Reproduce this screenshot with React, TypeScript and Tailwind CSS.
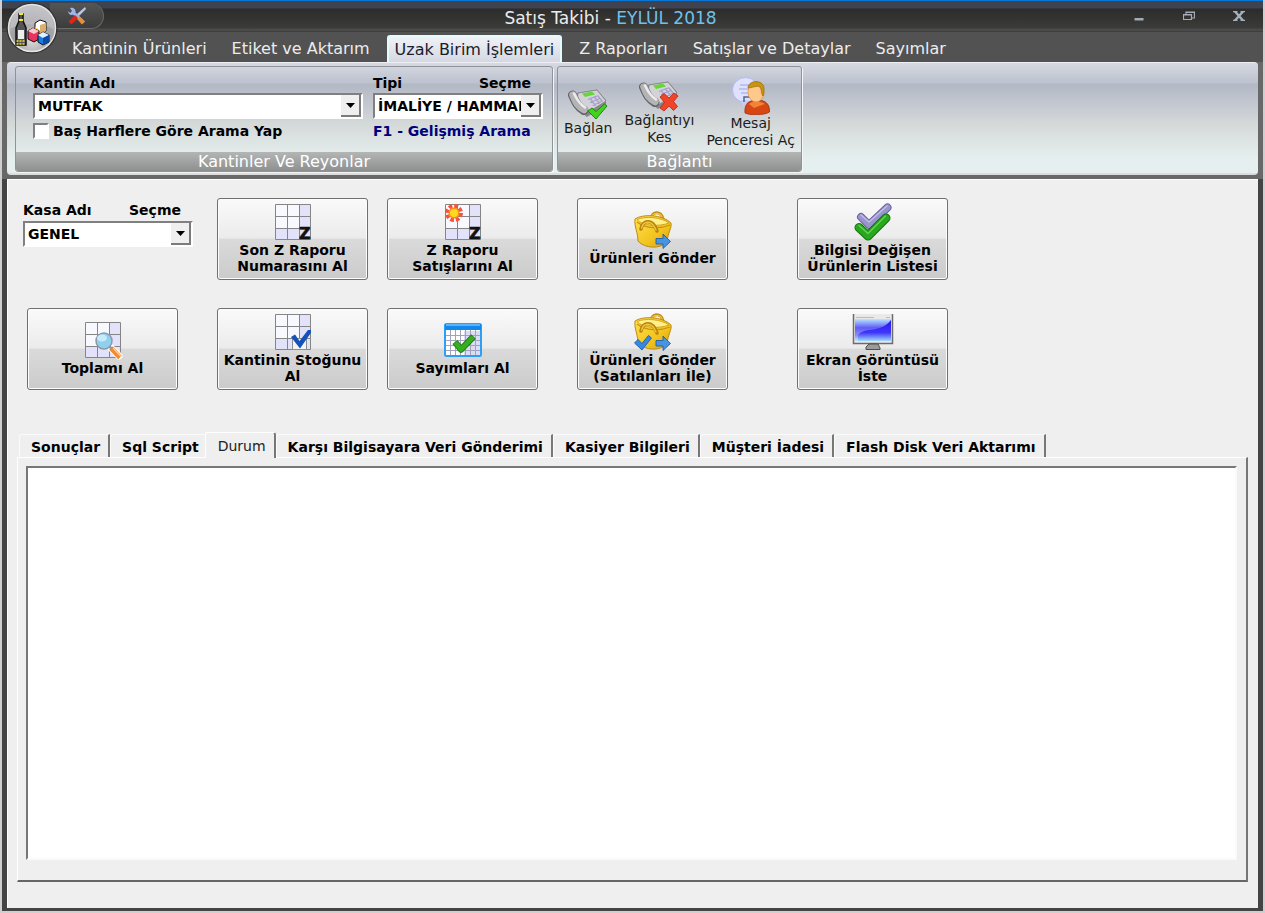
import React, { useState } from 'react';

const ribbonTabs = [
  'Kantinin Ürünleri',
  'Etiket ve Aktarım',
  'Uzak Birim İşlemleri',
  'Z Raporları',
  'Satışlar ve Detaylar',
  'Sayımlar'
];

const sheetTabs = [
  'Sonuçlar',
  'Sql Script',
  'Durum',
  'Karşı Bilgisayara Veri Gönderimi',
  'Kasiyer Bilgileri',
  'Müşteri İadesi',
  'Flash Disk Veri Aktarımı'
];

const GridBase = () => (
  <>
    <rect x="0.5" y="0.5" width="35" height="35" fill="#f8f8ff" />
    <path d="M24 1h11v34H1V24h23z" fill="#e2e2fb" />
    <path d="M0.5 0.5h35v35h-35zM12.5 0v36M24.5 0v36M0 12.5h36M0 24.5h36" fill="none" stroke="#858585" />
  </>
);

const GridZIcon = () => (
  <svg width="36" height="36" viewBox="0 0 36 36" className="overflow-visible">
    <GridBase />
    <text x="24" y="35" fontSize="16" fontWeight="bold" stroke="#111" strokeWidth="0.6" fill="#111">Z</text>
  </svg>
);

const GridNewIcon = () => (
  <svg width="36" height="36" viewBox="0 0 36 36" className="overflow-visible">
    <GridBase />
    <circle cx="9" cy="9" r="7" fill="none" stroke="#f2553a" strokeWidth="4" strokeDasharray="3.6 1.9" />
    <circle cx="9" cy="9" r="5.5" fill="#ff8a1e" />
    <circle cx="9" cy="9" r="4" fill="#ffd91c" />
    <text x="24" y="35" fontSize="16" fontWeight="bold" stroke="#111" strokeWidth="0.6" fill="#111">Z</text>
  </svg>
);

const GridSearchIcon = () => (
  <svg width="36" height="36" viewBox="0 0 36 36" className="overflow-visible">
    <GridBase />
    <path d="M25 25l9 9" stroke="#fff" strokeWidth="7" strokeLinecap="round" />
    <path d="M26 26l9 9.500" stroke="#f28a2e" strokeWidth="5" />
    <path d="M28 26l8 8.500" stroke="#ffd2a0" strokeWidth="1.200" />
    <path d="M24 24l3 3" stroke="#999" strokeWidth="2.500" />
    <circle cx="19" cy="19" r="8" fill="#8fd0ee" stroke="#8a9aa6" strokeWidth="1.500" />
    <ellipse cx="17" cy="16" rx="5" ry="3.500" fill="#c6ebfa" />
  </svg>
);

const GridCheckIcon = () => (
  <svg width="36" height="36" viewBox="0 0 36 36">
    <GridBase />
    <rect x="17.500" y="24.500" width="14" height="11" fill="#f4f4f4" stroke="#8d8d8d" />
    <path d="M16 23l4-2.500 4.500 6.500L33 16h3.500v2L25 34.500z" fill="#1551b8" />
  </svg>
);

const CalendarIcon = () => (
  <svg width="38" height="36" viewBox="0 0 38 36">
    <rect x="1" y="2" width="36" height="32" rx="1.500" fill="#fff" stroke="#2ba0f5" strokeWidth="2" />
    <rect x="1" y="2" width="36" height="6" fill="#1188ea" />
    <path d="M2 3h34" stroke="#6cc3ff" strokeWidth="1.500" />
    <path d="M20 9h16v24H20z" fill="#dcdcf6" />
    <path d="M6.500 8v25M11.500 8v25M16.500 8v25M21.500 8v25M26.500 8v25M31.500 8v25M2 13.500h34M2 18.500h34M2 23.500h34M2 28.500h34" stroke="#a2a2ba" />
    <path d="M11 20l6 7.500L29.500 14.500" fill="none" stroke="#1d8211" strokeWidth="6.500" strokeLinejoin="round" />
    <path d="M11.500 20.500l5.500 7L29 15" fill="none" stroke="#37ae22" strokeWidth="4.500" strokeLinejoin="round" />
  </svg>
);

const BasketIcon = ({ withCheck = false }: { withCheck?: boolean }) => (
  <svg width="38" height="38" viewBox="0 0 38 38">
    <defs>
      <linearGradient id="basket" x1="0" y1="0" x2="1" y2="1">
        <stop offset="0" stopColor="#ffe24a" />
        <stop offset="0.600" stopColor="#f2c41f" />
        <stop offset="1" stopColor="#d89c10" />
      </linearGradient>
    </defs>
    <path d="M17 9C17 0 27 -1 29 8" fill="none" stroke="#c48d17" strokeWidth="3.200" />
    <path d="M17 9C17 1 27 0 28.500 8" fill="none" stroke="#f0c440" strokeWidth="1.300" />
    <path d="M1 8C8 3 28 3 37 12C38 17 34 21 33 31C27 38 11 38 4 30C4 22 0 15 1 8z" fill="url(#basket)" stroke="#bd8a13" />
    <path d="M3 8.500C11 5 27 6 35 12C25 16 8 15 3 8.500z" fill="#fff08a" stroke="#d6a51c" />
    <path d="M3 11C12 18 26 18 36 14" fill="none" stroke="#c99412" strokeWidth="1.300" />
    <path d="M7 18C9 8 19 8 23 20" fill="none" stroke="#b98211" strokeWidth="3.600" strokeLinecap="round" />
    <path d="M7.500 17C10 9 18 9 22 19" fill="none" stroke="#f1c63c" strokeWidth="1.400" strokeLinecap="round" />
    <path d="M22 27.500h7v-4.500l7.500 7.500-7.500 7v-4.500h-7z" fill="#4694e4" stroke="#215ca8" strokeWidth="0.900" />
    {withCheck && <path d="M0.500 30l3.500-3.500 4 4 6.500-8 3 2.500L8 37z" fill="#3689e0" stroke="#1d5bab" strokeWidth="0.900" />}
  </svg>
);

const DoubleCheckIcon = () => (
  <svg width="38" height="38" viewBox="0 0 38 38">
    <g fill="none" strokeLinecap="round" strokeLinejoin="round">
      <path d="M7 14l8 8L33.500 4.500" stroke="#6662a0" strokeWidth="8" />
      <path d="M7 14l8 8L33.500 4.500" stroke="#9894cc" strokeWidth="6" />
      <path d="M7 12l8 7L33 3" stroke="#c0bde6" strokeWidth="1.500" />
      <path d="M5 24.500l9 8.500L32 15" stroke="#157010" strokeWidth="9" />
      <path d="M5 24.500l9 8.500L32 15" stroke="#27a81d" strokeWidth="7" />
      <path d="M5 22.500l9 8L31.500 13" stroke="#6bd455" strokeWidth="1.300" />
    </g>
  </svg>
);

const MonitorIcon = () => (
  <svg width="42" height="36" viewBox="0 0 42 36">
    <defs>
      <linearGradient id="screen" x1="0" y1="0" x2="0" y2="1">
        <stop offset="0" stopColor="#b9e6ff" />
        <stop offset="0.400" stopColor="#5f5cf6" />
        <stop offset="0.750" stopColor="#8f8cff" />
        <stop offset="1" stopColor="#b9ecff" />
      </linearGradient>
      <linearGradient id="wave" x1="0" y1="0" x2="0" y2="1">
        <stop offset="0" stopColor="#2a12f0" />
        <stop offset="0.600" stopColor="#3f36fa" />
        <stop offset="1" stopColor="#9fd8ff" />
      </linearGradient>
    </defs>
    <path d="M1 0h40v30H1z" fill="#e9e9e9" />
    <path d="M1.500 0v29.500h39V0" fill="none" stroke="#6c6c6c" strokeWidth="1.500" />
    <path d="M4 3.500h18M34 3.500h4" stroke="#bbb" />
    <rect x="3" y="5" width="36" height="22" fill="url(#screen)" />
    <path d="M6 21C14 12 28 20 39 6v21H6z" fill="url(#wave)" />
    <path d="M17 30h9l2 4v1.500H14V33z" fill="#9b9b9b" stroke="#4d4d4d" />
  </svg>
);

const PhoneBase = () => (
  <>
    <path d="M8 5L29 1.500 38 12v5L19 29 8 20z" fill="#88888c" />
    <path d="M10 5L29 2 38 13 19 25 9 14z" fill="#d2d2d8" stroke="#818186" strokeWidth="0.800" />
    <path d="M14 5.500l10-2 3 3-10 2.500z" fill="#66d638" />
    <path d="M20 11.500l9-3.500M22 14.500l10-4M24.500 17.500l10-4.500M22 10l5.500 8M26 8.500l5.500 7M29.500 7.500l5 6" stroke="#a39fce" strokeWidth="1.300" />
    <path d="M4.500 7C8 15 10 19 16 22.500" fill="none" stroke="#626265" strokeWidth="9" strokeLinecap="round" />
    <path d="M5 7C8 15 10 18 16 21.500" fill="none" stroke="#b4b4b6" strokeWidth="7.500" strokeLinecap="round" />
    <path d="M6 5.500C9 12 12 16 17 19.500" fill="none" stroke="#ececec" strokeWidth="2.500" strokeLinecap="round" />
  </>
);

const PhoneOkIcon = () => (
  <svg width="40" height="32" viewBox="0 0 40 32">
    <PhoneBase />
    <path d="M20 23l4-3 4 3.500 8.500-7.500 2.500 2L28 31z" fill="#43d31e" stroke="#168b0b" />
  </svg>
);

const PhoneOffIcon = () => (
  <svg width="40" height="32" viewBox="0 0 40 32">
    <PhoneBase />
    <path d="M21 17l4-3.500 5 4.500 5-5 4 3-4.500 5.500 4 5-4 4-4.500-4.500L25 31l-4-3 4.500-5.500z" fill="#f1452a" stroke="#b52614" strokeWidth="0.800" />
  </svg>
);

const MessageIcon = () => (
  <svg width="38" height="38" viewBox="0 0 38 38">
    <ellipse cx="13.500" cy="13" rx="13" ry="12.500" fill="#dfe2ff" stroke="#b5b9f0" />
    <path d="M9 23l2 7 6-7z" fill="#c8ccf6" />
    <path d="M8 8h9M7 12h9M9 16h7" stroke="#b3b8ec" strokeWidth="1.300" />
    <path d="M12 25v-5h6" fill="none" stroke="#52628f" strokeWidth="1.500" />
    <path d="M13 36C12 26 18 23 25 23S38 26 37.500 35C32 38.500 18 38.500 13 36z" fill="#d84713" stroke="#a32e08" strokeWidth="0.800" />
    <path d="M17 27C19 24 30 24 33 27L22 31z" fill="#f28338" />
    <ellipse cx="24" cy="15" rx="8" ry="10" fill="#ffc98b" stroke="#dc954b" strokeWidth="0.800" />
    <path d="M16 11C16 3 31 2 32 11C32 15 32 17 31 19C29 17 30 13 28 10C25 8 20 11 16 11z" fill="#c99411" stroke="#9a6d08" strokeWidth="0.700" />
  </svg>
);

const ToolsIcon = () => (
  <svg width="20" height="20" viewBox="0 0 20 20">
    <path d="M3 2l2 3-2 2-2-2C1 8 4 10 6 8.500L15 18l3-2.500L8.500 6.500C9 4 7 1 3 2z" fill="#9fb6ea" />
    <path d="M18 1l1 2-7 7-2-2z" fill="#b8c6e8" />
    <path d="M8 9l3 3-6.500 6.500-3-3z" fill="#e0261b" />
    <path d="M12 11l6 4.500-3 3L10.500 13z" fill="#f08b28" />
  </svg>
);

const LogoIcon = () => (
  <svg width="52" height="52" viewBox="0 0 52 52">
    <defs>
      <radialGradient id="orb" cx="0.500" cy="0.750" r="0.800">
        <stop offset="0" stopColor="#dedede" />
        <stop offset="0.500" stopColor="#a0a0a2" />
        <stop offset="1" stopColor="#c8c8cc" />
      </radialGradient>
    </defs>
    <circle cx="26" cy="26" r="25.500" fill="#303030" />
    <circle cx="26" cy="26" r="23.500" fill="url(#orb)" stroke="#e4e4e4" strokeWidth="1.500" />
    <path d="M4 27C12 21 38 21 48 27C47 11 38 4 26 4S5 12 4 27z" fill="#c7c7cb" opacity="0.600" />
    <path d="M13 12h4v7l3 7v17H10V26l3-7z" fill="#555" stroke="#111" strokeWidth="1.500" />
    <path d="M13 12h4M13 18h4" stroke="#f5e928" strokeWidth="2" />
    <path d="M12 28h6v9h-6z" fill="#eee" />
    <path d="M10.500 39h9M10.500 42h9" stroke="#f3e52b" strokeWidth="1.500" strokeDasharray="2 1" />
    <path d="M29 21l5-3 6 2v9l-6 4-5-3z" fill="#fff" stroke="#111" />
    <path d="M34 23l6-2v8l-6 3z" fill="#dcae6a" />
    <path d="M29 25l5 3v5l-5-3z" fill="#f4e532" />
    <path d="M22 29l5-3 6 3v8l-5 3-6-3z" fill="#e8345c" stroke="#111" />
    <path d="M22 29l5-3 6 3-5 3z" fill="#fbc6d0" />
    <path d="M32 33l5-3 6 3v7l-6 3-5-3z" fill="#1a7be0" stroke="#111" />
    <path d="M32 33l5-3 6 3-6 3z" fill="#dff3ff" />
    <path d="M37 36l6-3v7l-6 3z" fill="#0d49a8" />
  </svg>
);

interface ComboProps {
  id: string;
  value: string;
}

const Combo: React.FC<ComboProps> = ({ id, value }) => (
  <div className="relative h-[26px] border-2 border-t-[#808080] border-l-[#808080] border-r-white border-b-white bg-white">
    <select id={id} className="block h-full w-full appearance-none overflow-hidden bg-white pl-[3px] pr-5 text-sm leading-[22px] font-bold text-black outline-none">
      <option>{value}</option>
    </select>
    <span className="pointer-events-none absolute inset-y-0 right-0 flex w-5 items-center justify-center border-r-2 border-b-2 border-[#7b7b7b] bg-[#efefef]">
      <svg width="9" height="5" viewBox="0 0 9 5">
        <path d="M0 0h9L4.500 5z" fill="#000" />
      </svg>
    </span>
  </div>
);

interface ActionButtonProps {
  icon: React.ReactNode;
  lines: string[];
}

const ActionButton: React.FC<ActionButtonProps> = ({ icon, lines }) => (
  <button className="flex h-[82px] w-[151px] flex-col items-center justify-center rounded-[3px] border border-[#707070] bg-[linear-gradient(#fafafa,#ebebeb_49%,#dadada_50%,#cbcbcb)] text-sm leading-4 font-bold text-black shadow-[inset_0_0_0_1px_#fcfcfc]">
    <span className="mb-0.5 flex h-9 items-center">{icon}</span>
    {lines.map((line) => (
      <span key={line} className="whitespace-nowrap">{line}</span>
    ))}
  </button>
);

const RibbonButton: React.FC<ActionButtonProps> = ({ icon, lines }) => (
  <button className="flex flex-col items-center justify-center text-sm leading-[17px] text-[#1c1c1c]">
    <span>{icon}</span>
    {lines.map((line) => (
      <span key={line} className="whitespace-nowrap">{line}</span>
    ))}
  </button>
);

interface GroupProps {
  title: string;
  children: React.ReactNode;
}

const RibbonGroup: React.FC<GroupProps> = ({ title, children }) => (
  <section className="flex flex-col overflow-hidden rounded-[3px] border border-[#8f9297] shadow-[1px_1px_0_#f4f6f8]">
    <div className="flex flex-1">{children}</div>
    <h2 className="h-[19px] bg-[linear-gradient(#b4b6b6,#8e9090)] text-center text-base leading-[19px] text-white">{title}</h2>
  </section>
);

const App: React.FC = () => {
  const [activeRibbon, setActiveRibbon] = useState('Uzak Birim İşlemleri');
  const [activeSheet, setActiveSheet] = useState('Durum');
  const [log, setLog] = useState('');

  return (
    <div className="flex min-h-screen flex-col border-x-2 border-b-2 border-[#cfcfcf] bg-[#444] font-['DejaVu_Sans',Verdana,sans-serif]">
      <header className="relative bg-[#525252]">
        <div className="flex h-8 items-center border-t border-b border-t-[#0878d8] border-b-[#3f3f3f] bg-[linear-gradient(#3f424f_0,#3f424f_7px,#2c2c2a_8px,#3b3b39_27px,#4a4a4a_28px)]">
          <div className="flex w-[102px] pl-12">
            <button aria-label="Araçlar" className="flex h-[26px] w-[54px] items-center justify-center rounded-r-full border-r border-b border-[#6b6b6b] bg-[linear-gradient(#555,#3c3c3c)]">
              <ToolsIcon />
            </button>
          </div>
          <h1 className="flex-1 pt-1 text-center text-[17px] leading-6 text-[#ececec]">
            Satış Takibi - <span className="text-[#70c0ee]">EYLÜL 2018</span>
          </h1>
          <div className="flex w-[146px] items-center justify-end gap-[30px] pr-3.5">
            <button aria-label="Küçült" className="flex h-5 w-5 items-center justify-center">
              <svg width="10" height="12" viewBox="0 0 10 12"><path d="M0.500 8h9v2.500h-9z" fill="#a5abb5" /></svg>
            </button>
            <button aria-label="Geri yükle" className="flex h-5 w-5 items-center justify-center">
              <svg width="12" height="10" viewBox="0 0 12 10"><path d="M0.500 3.500h8v5h-8zM3 3V1h8.500v6H9M0.500 4h8M3 1.500h8" fill="none" stroke="#a5abb5" strokeWidth="1.200" /></svg>
            </button>
            <button aria-label="Kapat" className="flex h-5 w-5 items-center justify-center">
              <svg width="12" height="10" viewBox="0 0 12 10"><path d="M2 0.500l8 9M10 0.500l-8 9" stroke="#a5b0bd" strokeWidth="2.400" /><path d="M0 0.600h4.500M7.500 0.600H12M0 9.400h4.500M7.500 9.400H12" stroke="#a5b0bd" strokeWidth="1.200" /></svg>
            </button>
          </div>
        </div>
        <nav className="flex items-end gap-[9px] pt-[3px] pl-[62px]">
          {ribbonTabs.map((tab) => (
            <button
              key={tab}
              onClick={() => setActiveRibbon(tab)}
              className={
                activeRibbon === tab
                  ? 'h-[27px] rounded-t-[3px] border-x-2 border-t-2 border-[#e4fbfb] bg-[linear-gradient(#f0f2f6,#d4d8e2)] px-1.5 text-base text-[#1b1b2c]'
                  : 'h-[27px] px-2 pt-px text-base text-[#ececec]'
              }
            >
              {tab}
            </button>
          ))}
        </nav>
        <button aria-label="Ana menü" className="absolute top-0.5 left-1 h-[52px] w-[52px] rounded-full">
          <LogoIcon />
        </button>
      </header>

      <div className="bg-[#686868] pr-[5px] pb-1 pl-[5px]">
        <div className="flex h-[113px] gap-1 rounded-[4px] border-t border-b-2 border-t-[#eceef3] border-b-[#dcdcdc] bg-[linear-gradient(#d6d9e2_0,#bcc2ce_20px,#b2b8c4_21px,#c4c8d1_42px,#d5dad9_62px,#e6efef_96px)] px-2 pt-[3px] pb-px">
          <RibbonGroup title="Kantinler Ve Reyonlar">
            <div className="flex gap-2.5 pt-2 pr-[9px] pl-[17px] text-sm leading-4 font-bold text-black">
              <div className="w-[330px]">
                <label htmlFor="kantin" className="mb-0.5 block">Kantin Adı</label>
                <Combo id="kantin" value="MUTFAK" />
                <label className="mt-1 flex items-center gap-1">
                  <input type="checkbox" className="h-4 w-4 appearance-none border-2 border-t-[#808080] border-l-[#808080] border-r-white border-b-white bg-white" />
                  Baş Harflere Göre Arama Yap
                </label>
              </div>
              <div className="w-[170px]">
                <div className="mb-0.5 flex justify-between pr-3">
                  <label htmlFor="tipi">Tipi</label>
                  <span>Seçme</span>
                </div>
                <Combo id="tipi" value="İMALİYE / HAMMADDE" />
                <button className="mt-1 block font-bold whitespace-nowrap text-[#00007e]">F1 - Gelişmiş Arama</button>
              </div>
            </div>
          </RibbonGroup>
          <RibbonGroup title="Bağlantı">
            <div className="flex gap-3 px-1.5 pt-1.5">
              <RibbonButton icon={<PhoneOkIcon />} lines={['Bağlan']} />
              <RibbonButton icon={<PhoneOffIcon />} lines={['Bağlantıyı', 'Kes']} />
              <RibbonButton icon={<MessageIcon />} lines={['Mesaj', 'Penceresi Aç']} />
            </div>
          </RibbonGroup>
        </div>
      </div>

      <main className="mx-[5px] mb-[3px] flex flex-1 flex-col border-t border-l border-white bg-[#efefef] pt-[18px] pr-2.5 pb-[26px] pl-[9px]">
        <div className="grid grid-cols-[194px_170px_190px_220px_152px] gap-y-7 pl-[6px]">
          <div className="w-[170px] pt-1 text-sm leading-4 font-bold text-black">
            <div className="mb-[3px] flex justify-between pr-3">
              <label htmlFor="kasa">Kasa Adı</label>
              <span>Seçme</span>
            </div>
            <Combo id="kasa" value="GENEL" />
          </div>
          <ActionButton icon={<GridZIcon />} lines={['Son Z Raporu', 'Numarasını Al']} />
          <ActionButton icon={<GridNewIcon />} lines={['Z Raporu', 'Satışlarını Al']} />
          <ActionButton icon={<BasketIcon />} lines={['Ürünleri Gönder']} />
          <ActionButton icon={<DoubleCheckIcon />} lines={['Bilgisi Değişen', 'Ürünlerin Listesi']} />
          <div className="pl-1">
            <ActionButton icon={<GridSearchIcon />} lines={['Toplamı Al']} />
          </div>
          <ActionButton icon={<GridCheckIcon />} lines={['Kantinin Stoğunu', 'Al']} />
          <ActionButton icon={<CalendarIcon />} lines={['Sayımları Al']} />
          <ActionButton icon={<BasketIcon withCheck />} lines={['Ürünleri Gönder', '(Satılanları İle)']} />
          <ActionButton icon={<MonitorIcon />} lines={['Ekran Görüntüsü', 'İste']} />
        </div>

        <div role="tablist" className="mt-[42px] flex h-[25px] items-end pl-0.5">
          {sheetTabs.map((tab) => (
            <button
              key={tab}
              role="tab"
              aria-selected={activeSheet === tab}
              onClick={() => setActiveSheet(tab)}
              className={
                activeSheet === tab
                  ? 'relative -mb-px -ml-1 h-[26px] rounded-t-[3px] border-t border-r-2 border-l border-t-white border-r-[#777] border-l-white bg-[#efefef] pr-2 pl-3 text-sm text-[#222]'
                  : 'h-[23px] rounded-tl-[3px] border-t border-r-2 border-l border-t-[#fafafa] border-r-[#777] border-l-[#fafafa] pt-0.5 pr-2 pl-[11px] text-sm font-bold text-black'
              }
            >
              {tab}
            </button>
          ))}
        </div>
        <div className="flex flex-1 border-t border-r-2 border-b-2 border-l border-t-white border-r-[#777] border-b-[#666] border-l-white pt-2 pr-[9px] pb-5 pl-2">
          <textarea
            aria-label="Durum"
            value={log}
            onChange={(e) => setLog(e.target.value)}
            className="block w-full flex-1 resize-none border-2 border-t-[#777] border-l-[#777] border-r-[#fafafa] border-b-[#fafafa] bg-white p-1 text-sm outline-none"
          />
        </div>
      </main>
    </div>
  );
};

export default App;
